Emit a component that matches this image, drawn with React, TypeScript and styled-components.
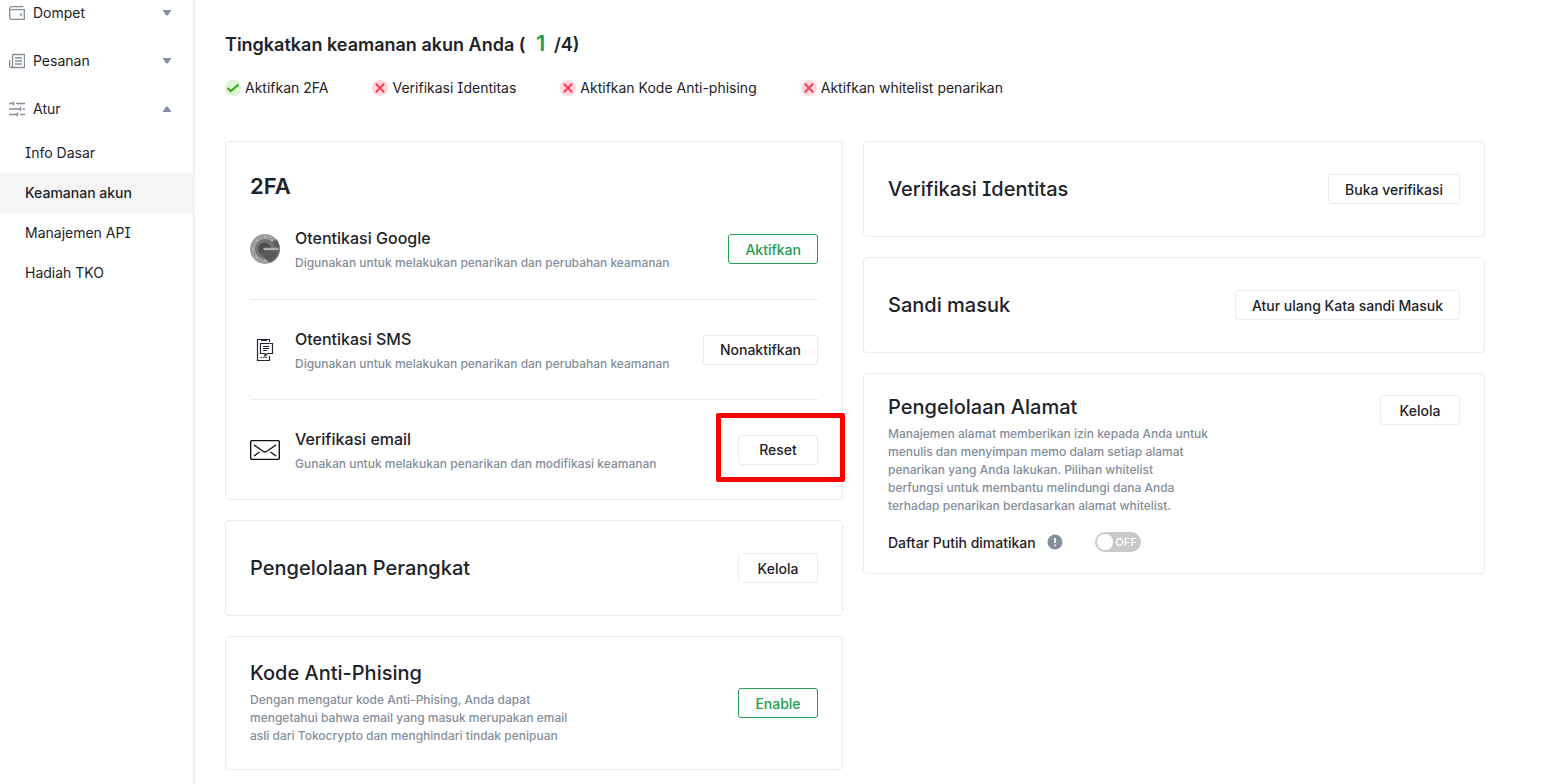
import React from "react";
import styled, { createGlobalStyle, css } from "styled-components";

const ink = "#1e2329";
const muted = "#848e9c";
const line = "#eaecef";
const green = "#20a050";

const GlobalStyle = createGlobalStyle`
  *, *::before, *::after { box-sizing: border-box; }
  body {
    margin: 0;
    background: #fff;
    color: ${ink};
    font-family: Inter, "Liberation Sans", sans-serif;
    font-feature-settings: "cv08";
    font-size: 14px;
  }
  h1, h2, h3, p, ul { margin: 0; padding: 0; }
  ul { list-style: none; }
`;

const Page = styled.div`
  display: flex;
  min-height: 100vh;
`;

const Sidebar = styled.nav`
  flex: none;
  width: 194px;
  border-right: 1px solid ${line};
  box-shadow: 1px 0 2px rgba(0, 0, 0, 0.04);
`;

const MenuList = styled.ul`
  display: flex;
  flex-direction: column;
  gap: 22px;
`;

const MenuButton = styled.button`
  display: flex;
  align-items: center;
  width: 100%;
  height: 26px;
  padding: 0 21px 0 9px;
  border: 0;
  background: none;
  color: inherit;
  font: inherit;
  font-feature-settings: inherit;
  text-align: left;
  cursor: pointer;
`;

const MenuLabel = styled.span`
  flex: 1;
  margin-left: 8px;
  padding-bottom: 1px;
`;

const SubMenu = styled.ul`
  padding-top: 11px;
`;

const SubLink = styled.a<{ $active?: boolean }>`
  display: block;
  padding-left: 25px;
  line-height: 40px;
  color: inherit;
  text-decoration: none;
  ${(p) =>
    p.$active &&
    css`
      background: #f5f5f5;
      font-weight: 500;
    `}
`;

const Main = styled.main`
  flex: 1;
  min-width: 0;
  padding: 29px 71px 14px 31px;
`;

const Title = styled.h1`
  font-size: 18px;
  line-height: 28px;
  font-weight: 600;
`;

const Score = styled.span`
  margin: 0 4px 0 6px;
  color: ${green};
  font-size: 22px;
`;

const StatusList = styled.ul`
  display: flex;
  flex-wrap: wrap;
  gap: 8px 44px;
  margin: 19px 0 43px;
`;

const Status = styled.li`
  display: flex;
  align-items: center;
  gap: 4px;
  line-height: 20px;
`;

const Columns = styled.div`
  display: grid;
  grid-template-columns: 618fr 622fr;
  gap: 20px;
  align-items: start;
`;

const Column = styled.div`
  display: flex;
  flex-direction: column;
  gap: 20px;
`;

const Card = styled.section<{ $pad: number }>`
  padding: ${(p) => p.$pad}px 24px;
  border: 1px solid ${line};
  border-radius: 4px;
`;

const FactorCard = styled(Card)`
  padding-bottom: 0;
`;

const CardRow = styled.div<{ $top?: boolean }>`
  display: flex;
  align-items: ${(p) => (p.$top ? "flex-start" : "center")};
  justify-content: space-between;
  gap: 16px;
`;

const FactorHeading = styled.h2`
  font-size: 22px;
  line-height: 26px;
  font-weight: 600;
`;

const CardHeading = styled.h2`
  font-size: 20px;
  line-height: 24px;
  font-weight: 500;
`;

const Factor = styled.li`
  display: flex;
  align-items: center;
  height: 100px;
  & + & {
    border-top: 1px solid ${line};
  }
`;

const FactorIcon = styled.span`
  display: flex;
  justify-content: center;
  flex: none;
  width: 30px;
  margin-right: 15px;
`;

const FactorText = styled.div`
  flex: 1;
  min-width: 0;
`;

const FactorName = styled.h3`
  font-size: 16px;
  line-height: 24px;
  font-weight: 500;
`;

const Description = styled.p<{ $gap: number }>`
  margin-top: ${(p) => p.$gap}px;
  color: ${muted};
  font-size: 12px;
  line-height: 18px;
  font-weight: 500;
`;

const Button = styled.button<{ $primary?: boolean }>`
  flex: none;
  min-width: 80px;
  height: 30px;
  padding: 0 16px;
  border: 1px solid ${(p) => (p.$primary ? green : line)};
  border-radius: 3px;
  background: #fff;
  color: ${(p) => (p.$primary ? green : ink)};
  font: inherit;
  font-weight: 500;
  white-space: nowrap;
  cursor: pointer;
`;

const Highlighted = styled.div`
  position: relative;
  flex: none;
  &::after {
    content: "";
    position: absolute;
    top: -22px;
    right: -27px;
    bottom: -17px;
    left: -22px;
    border: 5px solid #fe0000;
    border-radius: 2px;
    pointer-events: none;
  }
`;

const ToggleRow = styled.div`
  display: flex;
  align-items: center;
  height: 20px;
  margin-top: 17px;
  font-weight: 500;
`;

const InfoButton = styled.button`
  display: flex;
  margin: 0 32px 0 11px;
  padding: 0;
  border: 0;
  background: none;
`;

const Switch = styled.label`
  position: relative;
  display: flex;
  align-items: center;
  justify-content: space-between;
  width: 46px;
  height: 20px;
  padding: 0 4px 0 2px;
  border-radius: 10px;
  background: #c9c9c9;
  color: #fff;
  font-size: 11px;
  font-weight: 500;
  cursor: pointer;
  &::before {
    content: "";
    width: 16px;
    height: 16px;
    border-radius: 50%;
    background: #fff;
  }
`;

const SwitchInput = styled.input`
  position: absolute;
  inset: 0;
  width: 100%;
  height: 100%;
  margin: 0;
  opacity: 0;
`;

const WalletIcon = () => (
  <svg width="16" height="16" viewBox="0 0 16 16" fill="none" stroke={muted} aria-hidden="true">
    <path d="M14.500 1.700H2.500a1.800 1.800 0 0 0-1.800 1.800V12.500a1.800 1.800 0 0 0 1.800 1.800h12.800V4.700H1.500" strokeWidth="1.300" />
    <path d="M11 8.500h2v2h-2z" fill={muted} stroke="none" />
  </svg>
);

const OrdersIcon = () => (
  <svg width="16" height="16" viewBox="0 0 16 16" fill="none" stroke={muted} strokeWidth="1.300" aria-hidden="true">
    <path d="M3.500 1.500h12v13H2.500a1.900 1.900 0 0 1-1.900-1.900V7M3.500 1.500v11a1.500 1.500 0 0 1-1.500 2M6 5h7M6 8h7M6 11h7" />
  </svg>
);

const SettingsIcon = () => (
  <svg width="16" height="16" viewBox="0 0 16 16" fill="none" stroke={muted} strokeWidth="1.400" aria-hidden="true">
    <path d="M0 2.500h5M4.500 .5v4M7 2.500h9M0 8h11M11.500 6v4M13.500 8H16M0 13.500h8M8.500 11.500v4M11 13.500h5" />
  </svg>
);

const Caret = ({ up }: { up?: boolean }) => (
  <svg width="10" height="6" viewBox="0 0 10 6" fill={muted} aria-hidden="true">
    <path d={up ? "M1 6V5.200L4.400 .6h1.200L9 5.200V6z" : "M1 0h8v1L5.600 5.600H4.400L1 1z"} />
  </svg>
);

const CheckIcon = () => (
  <svg width="16" height="16" viewBox="0 0 16 16" aria-hidden="true">
    <circle cx="8" cy="8" r="8" fill="#dcf5d3" />
    <path d="m2.600 8 3.200 3.200 7.700-6.700" fill="none" stroke="#3ba60d" strokeWidth="2" />
  </svg>
);

const CrossIcon = () => (
  <svg width="16" height="16" viewBox="0 0 16 16" aria-hidden="true">
    <circle cx="8" cy="8" r="8" fill="#ffd6dc" />
    <path d="m3.800 3.800 8.400 8.400m0-8.400-8.400 8.400" fill="none" stroke="#f8405c" strokeWidth="2" />
  </svg>
);

const GoogleIcon = () => (
  <svg width="30" height="30" viewBox="0 0 30 30" aria-hidden="true">
    <circle cx="15" cy="15" r="15" fill="#9e9e9e" />
    <path d="M15 15 26 5a15 15 0 0 1-6 24z" fill="#6c6c6c" />
    <path d="M22 8.500 26.500 5.500Q29 9 29.500 13L22 14z" fill="#606060" />
    <circle cx="15" cy="15" r="10" fill="#737373" />
    <circle cx="14.500" cy="15" r="6.300" fill="#4f4f4f" />
    <path d="M10 19.500 19 28q7-3 9.500-12H15z" fill="#595959" />
    <path d="M14.500 15H27.500" stroke="#adadad" strokeWidth="2.400" strokeLinecap="round" />
    <g fill="#bdbdbd">
      <circle cx="3" cy="15" r=".9" />
      <circle cx="6.500" cy="6.500" r=".9" />
      <circle cx="15" cy="3" r=".9" />
      <circle cx="6.500" cy="23.500" r=".9" />
      <circle cx="15" cy="27" r=".9" />
    </g>
  </svg>
);

const SmsIcon = () => (
  <svg width="18" height="24" viewBox="0 0 18 24" fill="none" stroke="#222831" aria-hidden="true">
    <path d="M13.500 4V1.500H1.500v21h12V18" strokeWidth="1.200" />
    <path d="M5 2h6" strokeWidth="2" />
    <path d="M4.500 5.500h12v10h-5L9 18v-2.500H4.500z" strokeWidth="1.200" />
    <path d="M7 8.500h6M7 10.500h6M7 12.500h4M4.500 19.500H6M7 19.500h1.500M9.500 19.500H11" />
  </svg>
);

const MailIcon = () => (
  <svg width="30" height="20" viewBox="0 0 30 20" fill="none" stroke="#111" strokeWidth="1.400" aria-hidden="true">
    <rect x=".65" y=".65" width="28.700" height="18.700" rx="1.500" />
    <path d="m4 5 9.500 6.500q1.500 1 3 0L26 5M4 16l5.500-4M26 16l-5.500-4" />
  </svg>
);

const InfoIcon = () => (
  <svg width="16" height="16" viewBox="0 0 16 16" aria-hidden="true">
    <circle cx="8" cy="8" r="7.500" fill={muted} />
    <path d="M8 4v5M8 10.500v1.700" stroke="#fff" strokeWidth="1.600" />
  </svg>
);

const subItems = ["Info Dasar", "Keamanan akun", "Manajemen API", "Hadiah TKO"];

const statuses = [
  { label: "Aktifkan 2FA", done: true },
  { label: "Verifikasi Identitas", done: false },
  { label: "Aktifkan Kode Anti-phising", done: false },
  { label: "Aktifkan whitelist penarikan", done: false },
];

const factors = [
  {
    name: "Otentikasi Google",
    text: "Digunakan untuk melakukan penarikan dan perubahan keamanan",
    icon: <GoogleIcon />,
    action: <Button $primary>Aktifkan</Button>,
  },
  {
    name: "Otentikasi SMS",
    text: "Digunakan untuk melakukan penarikan dan perubahan keamanan",
    icon: <SmsIcon />,
    action: <Button>Nonaktifkan</Button>,
  },
  {
    name: "Verifikasi email",
    text: "Gunakan untuk melakukan penarikan dan modifikasi keamanan",
    icon: <MailIcon />,
    action: (
      <Highlighted>
        <Button>Reset</Button>
      </Highlighted>
    ),
  },
];

export default function App() {
  return (
    <Page>
      <GlobalStyle />
      <Sidebar>
        <MenuList>
          <li>
            <MenuButton aria-expanded="false">
              <WalletIcon />
              <MenuLabel>Dompet</MenuLabel>
              <Caret />
            </MenuButton>
          </li>
          <li>
            <MenuButton aria-expanded="false">
              <OrdersIcon />
              <MenuLabel>Pesanan</MenuLabel>
              <Caret />
            </MenuButton>
          </li>
          <li>
            <MenuButton aria-expanded="true">
              <SettingsIcon />
              <MenuLabel>Atur</MenuLabel>
              <Caret up />
            </MenuButton>
            <SubMenu>
              {subItems.map((item) => (
                <li key={item}>
                  <SubLink href="#" $active={item === "Keamanan akun"}>
                    {item}
                  </SubLink>
                </li>
              ))}
            </SubMenu>
          </li>
        </MenuList>
      </Sidebar>
      <Main>
        <Title>
          Tingkatkan keamanan akun Anda ( <Score>1</Score> /4)
        </Title>
        <StatusList>
          {statuses.map((s) => (
            <Status key={s.label}>
              {s.done ? <CheckIcon /> : <CrossIcon />}
              {s.label}
            </Status>
          ))}
        </StatusList>
        <Columns>
          <Column>
            <FactorCard $pad={31}>
              <FactorHeading>2FA</FactorHeading>
              <ul>
                {factors.map((f) => (
                  <Factor key={f.name}>
                    <FactorIcon>{f.icon}</FactorIcon>
                    <FactorText>
                      <FactorName>{f.name}</FactorName>
                      <Description $gap={4}>{f.text}</Description>
                    </FactorText>
                    {f.action}
                  </Factor>
                ))}
              </ul>
            </FactorCard>
            <Card $pad={32}>
              <CardRow>
                <CardHeading>Pengelolaan Perangkat</CardHeading>
                <Button>Kelola</Button>
              </CardRow>
            </Card>
            <Card $pad={24}>
              <CardRow>
                <div>
                  <CardHeading>Kode Anti-Phising</CardHeading>
                  <Description $gap={6}>
                    Dengan mengatur kode Anti-Phising, Anda dapat
                    <br />
                    mengetahui bahwa email yang masuk merupakan email
                    <br />
                    asli dari Tokocrypto dan menghindari tindak penipuan
                  </Description>
                </div>
                <Button $primary>Enable</Button>
              </CardRow>
            </Card>
          </Column>
          <Column>
            <Card $pad={32}>
              <CardRow>
                <CardHeading>Verifikasi Identitas</CardHeading>
                <Button>Buka verifikasi</Button>
              </CardRow>
            </Card>
            <Card $pad={32}>
              <CardRow>
                <CardHeading>Sandi masuk</CardHeading>
                <Button>Atur ulang Kata sandi Masuk</Button>
              </CardRow>
            </Card>
            <Card $pad={21}>
              <CardRow $top>
                <div>
                  <CardHeading>Pengelolaan Alamat</CardHeading>
                  <Description $gap={6}>
                    Manajemen alamat memberikan izin kepada Anda untuk
                    <br />
                    menulis dan menyimpan memo dalam setiap alamat
                    <br />
                    penarikan yang Anda lakukan. Pilihan whitelist
                    <br />
                    berfungsi untuk membantu melindungi dana Anda
                    <br />
                    terhadap penarikan berdasarkan alamat whitelist.
                  </Description>
                </div>
                <Button>Kelola</Button>
              </CardRow>
              <ToggleRow>
                <label htmlFor="whitelist">Daftar Putih dimatikan</label>
                <InfoButton aria-label="Info">
                  <InfoIcon />
                </InfoButton>
                <Switch>
                  <SwitchInput id="whitelist" type="checkbox" role="switch" />
                  OFF
                </Switch>
              </ToggleRow>
            </Card>
          </Column>
        </Columns>
      </Main>
    </Page>
  );
}
